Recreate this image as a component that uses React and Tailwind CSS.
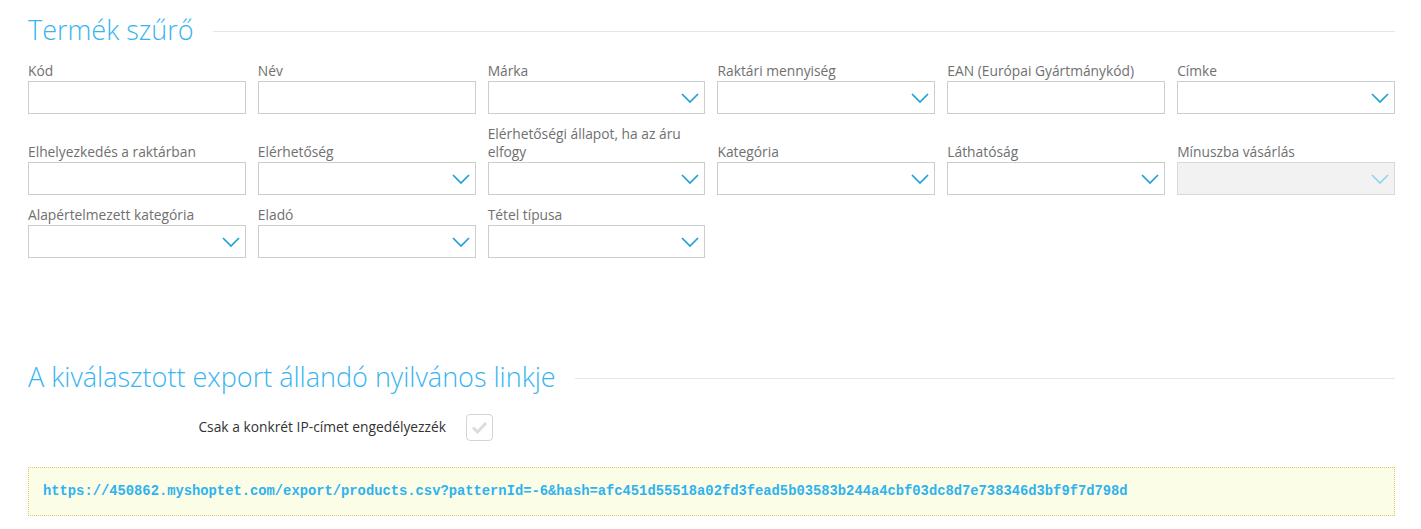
import React from "react";

const Chevron = ({ disabled }) => (
  <svg width="18" height="10" viewBox="0 0 18 10" className="shrink-0">
    <polyline
      points="1,1 9,9 17,1"
      fill="none"
      stroke={disabled ? "#8fd2ef" : "#1e9fd8"}
      strokeWidth="1.7"
    />
  </svg>
);

const Field = ({ label, type = "input", disabled }) => (
  <div className="flex flex-col">
    <label className="text-[13.8px] leading-[18px] text-[#707070] mb-px">{label}</label>
    {type === "input" ? (
      <div className="h-[33px] border border-[#cdcdcd] bg-white" />
    ) : (
      <div
        className={
          "h-[33px] border flex items-center justify-end pr-[5px] " +
          (disabled ? "border-[#d9d9d9] bg-[#f2f2f2]" : "border-[#cdcdcd] bg-white")
        }
      >
        <Chevron disabled={disabled} />
      </div>
    )}
  </div>
);

const SectionTitle = ({ children }) => (
  <div className="flex items-center">
    <h2 className="text-[27px] leading-[38px] font-light text-[#38b4ef] whitespace-nowrap">{children}</h2>
    <div className="flex-1 h-px bg-[#e6e6e6] ml-[19px] mt-[2px]" />
  </div>
);

export default function App() {
  return (
    <div
      className="w-[1421px] h-[529px] bg-white pl-[28px] pr-[26px] pt-[11px] overflow-hidden"
      style={{ fontFamily: '"Open Sans", sans-serif' }}
    >
      <SectionTitle>Termék szűrő</SectionTitle>
      <div className="grid grid-cols-6 gap-x-[12px] gap-y-[11px] items-end mt-[13px]">
        <Field label="Kód" />
        <Field label="Név" />
        <Field label="Márka" type="select" />
        <Field label="Raktári mennyiség" type="select" />
        <Field label="EAN (Európai Gyártmánykód)" />
        <Field label="Címke" type="select" />
        <Field label="Elhelyezkedés a raktárban" />
        <Field label="Elérhetőség" type="select" />
        <Field label="Elérhetőségi állapot, ha az áru elfogy" type="select" />
        <Field label="Kategória" type="select" />
        <Field label="Láthatóság" type="select" />
        <Field label="Mínuszba vásárlás" type="select" disabled />
        <Field label="Alapértelmezett kategória" type="select" />
        <Field label="Eladó" type="select" />
        <Field label="Tétel típusa" type="select" />
      </div>

      <div className="mt-[100px]">
        <SectionTitle>A kiválasztott export állandó nyilvános linkje</SectionTitle>
      </div>

      <div className="flex items-center mt-[18px]">
        <div className="w-[418px] text-right text-[13.8px] text-[#333]">Csak a konkrét IP-címet engedélyezzék</div>
        <div className="ml-[20px] w-[27px] h-[27px] border border-[#d4d4d4] rounded-[4px] flex items-center justify-center bg-white">
          <svg width="17" height="13" viewBox="0 0 17 13">
            <polyline points="2,6.5 6.5,11 15,2" fill="none" stroke="#dcdcdc" strokeWidth="3" />
          </svg>
        </div>
      </div>

      <div className="mt-[26px] h-[49px] border border-dotted border-[#e9c36a] bg-[#fbfde7] flex items-center pl-[14px] pt-[2px]">
        <span
          className="text-[13.8px] font-bold text-[#2fb2ee] whitespace-nowrap"
          style={{ fontFamily: '"Liberation Mono", "Courier New", monospace' }}
        >
          https://450862.myshoptet.com/export/products.csv?patternId=-6&amp;hash=afc451d55518a02fd3fead5b03583b244a4cbf03dc8d7e738346d3bf9f7d798d
        </span>
      </div>
    </div>
  );
}
